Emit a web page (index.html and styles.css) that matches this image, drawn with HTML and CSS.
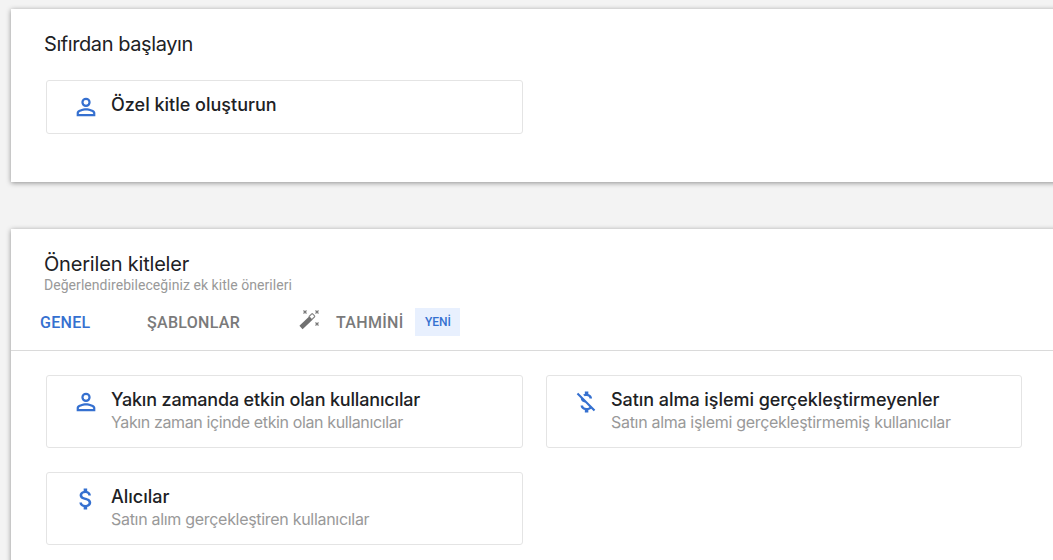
FILE: index.html
```html
<!DOCTYPE html>
<html lang="tr">
<head>
<meta charset="utf-8">
<title>Kitleler</title>
<link rel="stylesheet" href="styles.css">
</head>
<body>
<svg class="symbols" aria-hidden="true">
  <symbol id="person" viewBox="0 0 24 24"><path d="M12 4a4 4 0 1 0 0 8 4 4 0 0 0 0-8zm0 1.9a2.1 2.1 0 1 1 0 4.2 2.1 2.1 0 0 1 0-4.2zM12 13c-2.7 0-8 1.3-8 4v3h16v-3c0-2.700-5.300-4-8-4zm0 1.900c3 0 6.100 1.500 6.100 2.100v1.100H5.900V17c0-.6 3.100-2.100 6.100-2.100z"/></symbol>
</svg>
<main class="page">
  <section class="panel panel-start">
    <h2 class="heading heading-start">Sıfırdan başlayın</h2>
    <div class="cards">
      <article class="card card-single">
        <svg class="icon person"><use href="#person"/></svg>
        <div class="card-text"><h3 class="title t-custom">Özel kitle oluşturun</h3></div>
      </article>
    </div>
  </section>
  <section class="panel panel-suggested">
    <h2 class="heading heading-suggested">Önerilen kitleler</h2>
    <p class="subheading">Değerlendirebileceğiniz ek kitle önerileri</p>
    <nav class="tabs">
      <a class="tab tab-active">GENEL</a>
      <a class="tab tab-templates">ŞABLONLAR</a>
      <a class="tab tab-predictive">
        <svg class="wand" viewBox="0 0 22 22"><path class="rod" d="m3 18.500 10-9.500"/><path class="tip" d="m10.800 7.700 2.700-2.600a1 1 0 0 1 1.400 0l1.500 1.500a1 1 0 0 1 0 1.400l-2.700 2.600"/><path class="sparks" d="m5.500 1.500 3 3m0-3-3 3m12-3 3 3m0-3-3 3m0 9 3 3m0-3-3 3"/></svg>
        <span class="tab-label">TAHMİNİ</span>
        <span class="badge">YENİ</span>
      </a>
    </nav>
    <div class="cards">
      <article class="card">
        <svg class="icon person"><use href="#person"/></svg>
        <div class="card-text">
          <h3 class="title t-active">Yakın zamanda etkin olan kullanıcılar</h3>
          <p class="description d-active">Yakın zaman içinde etkin olan kullanıcılar</p>
        </div>
      </article>
      <article class="card">
        <svg class="icon" viewBox="0 0 24 24"><path d="M12.500 6.900c1.780 0 2.440.850 2.500 2.100h2.210c-.070-1.720-1.120-3.300-3.210-3.810V3h-3v2.160c-.530.120-1.030.300-1.480.540l1.470 1.470c.410-.170.910-.270 1.510-.270zM5.330 4.060 4.060 5.330 7.500 8.770c0 2.080 1.560 3.210 3.910 3.910l3.510 3.510c-.340.480-1.050.910-2.420.910-2.060 0-2.870-.920-2.980-2.100h-2.200c.120 2.190 1.760 3.420 3.680 3.830V21h3v-2.150c.960-.180 1.820-.550 2.450-1.120l2.220 2.220 1.270-1.270z"/></svg>
        <div class="card-text">
          <h3 class="title t-nonbuyers">Satın alma işlemi gerçekleştirmeyenler</h3>
          <p class="description d-nonbuyers">Satın alma işlemi gerçekleştirmemiş kullanıcılar</p>
        </div>
      </article>
      <article class="card">
        <svg class="icon" viewBox="0 0 24 24"><path d="M11.800 10.900c-2.270-.590-3-1.200-3-2.150 0-1.090 1.010-1.850 2.700-1.850 1.780 0 2.440.850 2.500 2.100h2.210c-.070-1.720-1.120-3.300-3.210-3.810V3h-3v2.160c-1.940.420-3.500 1.680-3.500 3.610 0 2.310 1.910 3.460 4.700 4.130 2.500.600 3 1.480 3 2.410 0 .690-.490 1.790-2.700 1.790-2.060 0-2.870-.920-2.980-2.100h-2.200c.120 2.190 1.760 3.420 3.680 3.830V21h3v-2.150c1.950-.370 3.500-1.500 3.500-3.550 0-2.840-2.430-3.810-4.700-4.400z"/></svg>
        <div class="card-text">
          <h3 class="title t-buyers">Alıcılar</h3>
          <p class="description d-buyers">Satın alım gerçekleştiren kullanıcılar</p>
        </div>
      </article>
    </div>
  </section>
</main>
</body>
</html>
```
FILE: styles.css
```css
* { box-sizing: border-box; }
body { margin: 0; background: #f3f3f3; font-family: Inter, "Open Sans", sans-serif; color: #202124; }
h2, h3, p { margin: 0; white-space: nowrap; }
.symbols { display: none; }
.page { height: 560px; overflow: hidden; padding: 9px 0 0 11px; }
.panel { background: #fff; margin-right: -10px; box-shadow: 0 1px 5px rgba(0,0,0,.42); }
.panel-start { height: 173px; padding-top: 22px; }
.panel-suggested { height: 360px; margin-top: 47px; padding-top: 22px; }
.heading { margin-left: 33px; font-size: 20px; line-height: 26px; font-weight: 400; }
.heading-start { letter-spacing: -.42px; }
.heading-suggested { letter-spacing: -.19px; }
.subheading { margin-left: 33px; color: #999; font: 14px/16px Roboto, sans-serif; letter-spacing: .05px; }
.tabs { display: flex; height: 58px; border-bottom: 1px solid #dadada; padding-left: 29px; font: 500 16px/55px Roboto, sans-serif; color: #7a7a7a; letter-spacing: .3px; }
.tab { display: flex; align-items: center; }
.tab-active { color: #3570d0; width: 107px; }
.tab-templates { width: 151px; }
.tab-label, .tab-active, .tab-templates { padding-top: 2px; }
.wand { width: 22px; height: 22px; margin: -4px 16px 0 0; fill: none; }
.rod { stroke: #707070; stroke-width: 4.600; }
.tip { stroke: #858585; stroke-width: 1.200; }
.sparks { stroke: #777; stroke-width: 1.100; }
.badge { margin-left: 12px; width: 45px; height: 28px; background: #e8f0fe; color: #3570d0; font-size: 12px; line-height: 28px; text-align: center; letter-spacing: 0; }
.cards { display: grid; grid-template-columns: 477px 476px; gap: 24px 23px; padding: 24px 0 0 35px; }
.card { height: 73px; border: 1px solid #e4e4e4; border-radius: 3px; display: flex; padding: 12px 0 0 24.5px; }
.card-single { height: 54px; }
.panel-start .cards { padding-top: 23px; }
.icon { width: 28px; height: 28px; margin: 0 11.5px 0 0; fill: #3570d0; flex: none; }
.title { font-size: 18px; line-height: 24px; font-weight: 500; }
.t-active { letter-spacing: -.17px; }
.t-nonbuyers { letter-spacing: -.05px; }
.description { font-size: 16px; line-height: 22px; margin-top: -1px; color: #999; }
.d-active { letter-spacing: -.38px; }
.d-nonbuyers, .d-buyers { letter-spacing: -.3px; }
```
